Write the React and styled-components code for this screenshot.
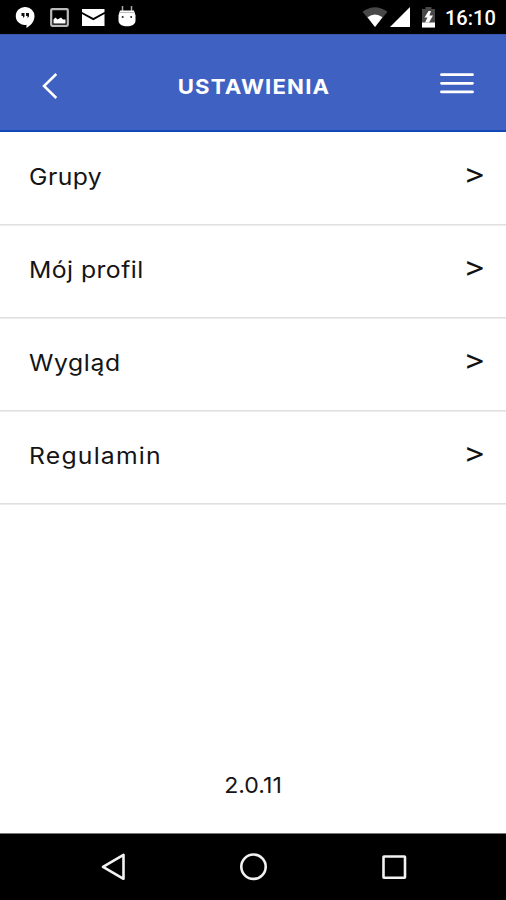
import React from "react";
import styled, { createGlobalStyle } from "styled-components";

const GlobalStyle = createGlobalStyle`
  * { box-sizing: border-box; }
  body { margin: 0; background: #fff; }
`;

const Screen = styled.div`
  width: 506px;
  height: 900px;
  display: flex;
  flex-direction: column;
  overflow: hidden;
  background: #fff;
  color: #141414;
  font-family: Inter, "Open Sans", sans-serif;
`;

const StatusBar = styled.div`
  flex: none;
  height: 34px;
  display: flex;
  justify-content: space-between;
  background: #000;
  color: #fff;
`;

const StatusIcons = styled.svg`
  display: block;
  height: 34px;
  width: ${(p) => p.$width}px;
`;

const StatusRight = styled.div`
  display: flex;
`;

const Clock = styled.span`
  width: 61px;
  font: 500 20px/36px Roboto, sans-serif;
  letter-spacing: 0;
  white-space: nowrap;
`;

const Header = styled.header`
  flex: none;
  height: 98px;
  display: grid;
  grid-template-columns: 100px 1fr 100px;
  align-items: center;
  background: #3f62c2;
  border-top: 1px solid #3858b0;
  border-bottom: 2px solid #1149b8;
`;

const HeaderButton = styled.button`
  height: 95px;
  padding: 0;
  border: 0;
  background: none;
  svg { display: block; }
`;

const Title = styled.h1`
  margin: 8px 0 0 2px;
  text-align: center;
  font-size: 20.5px;
  line-height: 28px;
  font-weight: 700;
  letter-spacing: 1.1px;
  color: #fff;
  transform: scaleX(1.08);
`;

const List = styled.ul`
  flex: none;
  margin: 0;
  padding: 0;
  list-style: none;
`;

const Row = styled.li`
  height: 93px;
  display: flex;
  align-items: center;
  justify-content: space-between;
  padding: 0 20px 4px 29px;
  box-shadow: inset 0 -1px #e0e0e0, 0 1px #ececec;
`;

const Label = styled.span`
  font-size: 22.5px;
  line-height: 30px;
  letter-spacing: ${(p) => p.$tracking}px;
  transform: scaleX(1.1);
  transform-origin: left;
`;

const Arrow = styled.span`
  margin-bottom: 5px;
  font-size: 28px;
  line-height: 30px;
  color: #111;
  transform: scaleX(1.2);
  transform-origin: right;
`;

const Version = styled.footer`
  flex: 1;
  display: flex;
  align-items: flex-end;
  justify-content: center;
  padding-bottom: 33px;
  font-size: 22px;
  line-height: 30px;
  transform: scaleX(1.05);
`;

const NavBar = styled.nav`
  flex: none;
  height: 67px;
  background: #000;
  border-top: 1px solid #777;
  svg { display: block; }
`;

const items = [
  { label: "Grupy", tracking: 0.4 },
  { label: "Mój profil", tracking: 0.4 },
  { label: "Wygląd", tracking: 0.55 },
  { label: "Regulamin", tracking: 1.1 },
];

export default function App() {
  return (
    <Screen>
      <GlobalStyle />
      <StatusBar>
        <StatusIcons $width={150} viewBox="0 0 150 34">
          <path d="M25.500 7a9 9 0 0 1 9 9c0 5-3 9-8 12v-3.200A9 9 0 1 1 25.500 7Z" fill="#fff" />
          <path d="M21.500 13h3v3.500l-1.500 1.500v-2h-1.500zM26 13h3v3.500L27.500 18v-2H26z" fill="#111" />
          <rect x="51.200" y="9.200" width="16.600" height="16.600" rx="1" fill="none" stroke="#bbb" strokeWidth="2.200" />
          <path d="M53.500 23.500v-4l2-2 2 2 3.500-2 2 2h2.500v4z" fill="#fff" />
          <path d="M82 9h22.500v3l-11.200 6L82 12z" fill="#fff" />
          <path d="M82 14l11.300 6.200L104.500 14v12H82z" fill="#fff" />
          <path d="M122.500 6v6M131.500 6v6" stroke="#aaa" strokeWidth="1.500" />
          <path d="M120 10.500h14l1.500 5v5c0 4-4 5.800-8.500 5.800s-8.500-1.800-8.500-5.800v-5z" fill="#fff" />
          <path d="M119.500 12.500h15" stroke="#bbb" strokeWidth="1" />
          <circle cx="122.700" cy="17" r="1" fill="#222" />
          <circle cx="131.200" cy="17" r="1" fill="#222" />
        </StatusIcons>
        <StatusRight>
          <StatusIcons $width={85} viewBox="360 0 85 34">
            <path d="M362.500 11.800Q375 2.500 387.500 11.800L375 27z" fill="#484848" />
            <path d="M367.500 17.200Q375 11.800 382.500 17.200L375 27z" fill="#fff" />
            <path d="M390 27L410 7v20z" fill="#fff" />
            <path d="M422 9h3.500V7h6v2h3.500v18.500h-13z" fill="#494949" />
            <path d="M422 22.500h13v5h-13z" fill="#fff" />
            <path d="M428.500 11l-4 6.500h3l-2.500 5h4l4-7h-3.500l1.500-4.500z" fill="#fff" />
          </StatusIcons>
          <Clock>16:10</Clock>
        </StatusRight>
      </StatusBar>
      <Header>
        <HeaderButton aria-label="Wstecz">
          <svg width="100" height="95" viewBox="0 35 100 95">
            <path d="M56.300 74L44 86l12.300 12" fill="none" stroke="#fff" strokeWidth="2.500" />
          </svg>
        </HeaderButton>
        <Title>USTAWIENIA</Title>
        <HeaderButton aria-label="Menu">
          <svg width="100" height="95" viewBox="406 35 100 95">
            <path d="M441.500 74.700h31M441.500 83.300h31M441.500 91.900h31" stroke="#fff" strokeWidth="2.800" strokeLinecap="round" />
          </svg>
        </HeaderButton>
      </Header>
      <List>
        {items.map((item) => (
          <Row key={item.label}>
            <Label $tracking={item.tracking}>{item.label}</Label>
            <Arrow>&gt;</Arrow>
          </Row>
        ))}
      </List>
      <Version>2.0.11</Version>
      <NavBar>
        <svg width="506" height="66" viewBox="0 834 506 66" fill="none" stroke="#f2f2f2" strokeWidth="2.600">
          <path d="M103 866.800L123.500 854.800v24z" strokeLinejoin="round" />
          <circle cx="253.500" cy="866.700" r="12.200" />
          <rect x="383.500" y="856.500" width="21.500" height="21.300" rx="0.500" />
        </svg>
      </NavBar>
    </Screen>
  );
}
